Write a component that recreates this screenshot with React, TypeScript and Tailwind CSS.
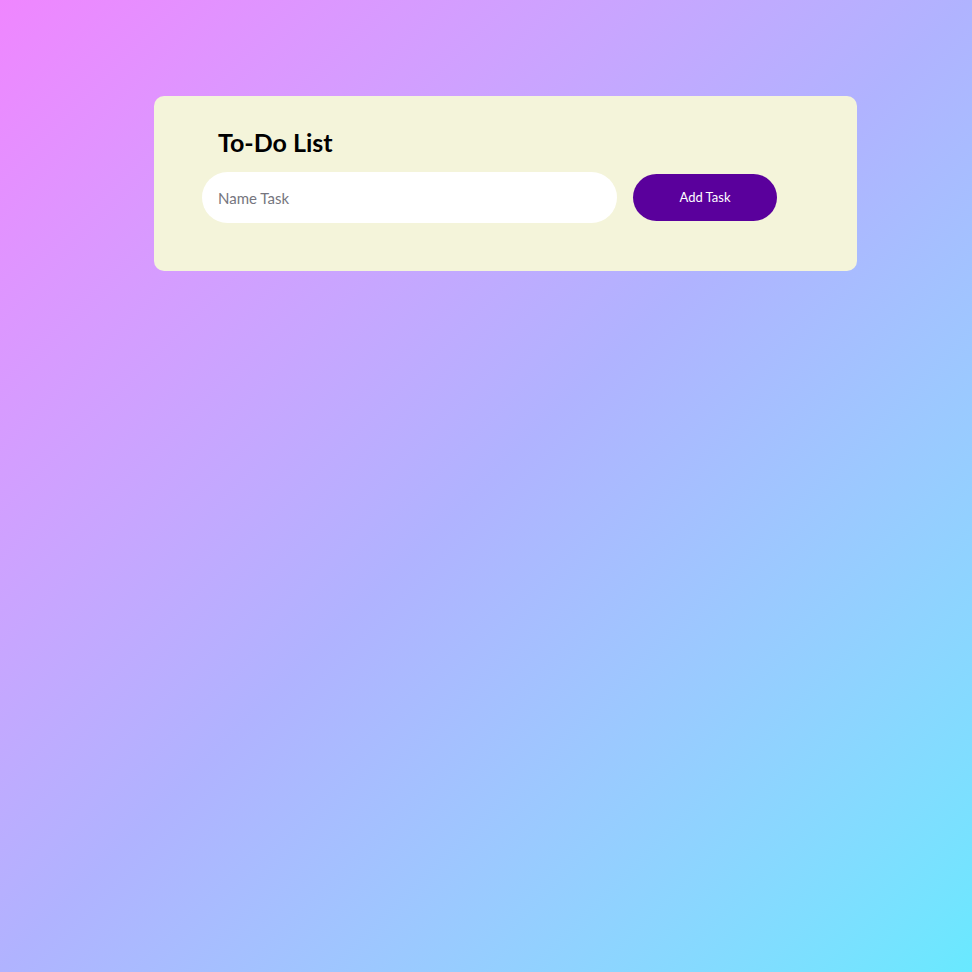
export default function App() {
  return (
    <div
      className="min-h-[972px] w-full bg-gradient-to-br from-[#ef86ff] via-[#b0b3ff] to-[#68e9ff] pt-[96px]"
      style={{ fontFamily: 'Lato, "Open Sans", sans-serif' }}
    >
      <div className="ml-[154px] w-[703px] h-[175px] rounded-[10px] bg-[#f4f4da] px-[48px] pt-[30px]">
        <h2 className="pl-[16px] text-[25px] leading-[32px] font-bold text-black">To-Do List</h2>
        <div className="mt-[14px] flex items-center gap-[16px]">
          <input
            type="text"
            placeholder="Name Task"
            className="h-[51px] w-[415px] rounded-full bg-white px-[16px] text-[15px] text-black placeholder:text-[#75757e] outline-none"
          />
          <button className="h-[47px] w-[144px] rounded-full bg-[#5a009c] text-[13px] text-white">
            Add Task
          </button>
        </div>
      </div>
    </div>
  );
}
